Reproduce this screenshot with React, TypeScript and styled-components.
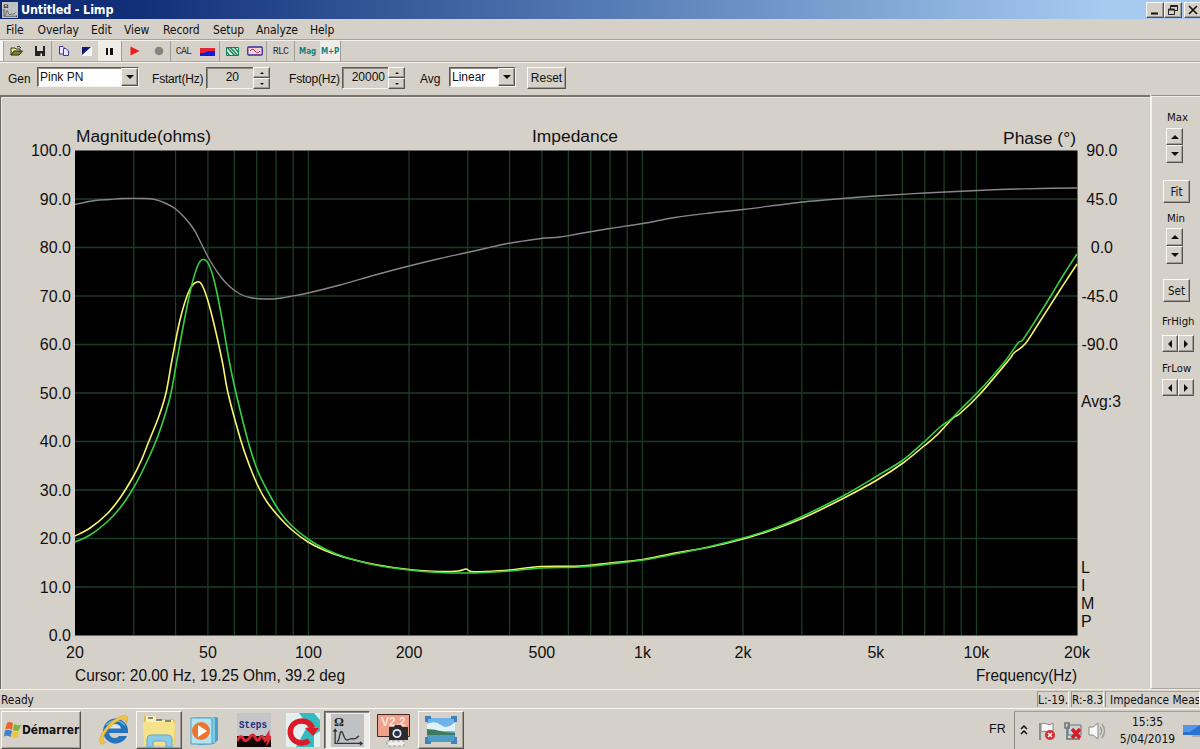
import React from "react";
import styled, { createGlobalStyle, css } from "styled-components";

const face = "#d5d0c8";
const ui = `"DejaVu Sans Condensed", "DejaVu Sans", sans-serif`;
const arial = `"Liberation Sans", Arial, sans-serif`;

const Global = createGlobalStyle`
  * { box-sizing: border-box; }
  html, body { margin: 0; padding: 0; }
  body { background: ${face}; color: #111; overflow: hidden; }
  svg { display: block; flex: none; }
`;

const raised = css`
  border: 1px solid;
  border-color: #fbfaf6 #55534f #55534f #fbfaf6;
  box-shadow: inset -1px -1px 0 #a09c95;
`;
const sunken = css`
  border: 1px solid;
  border-color: #5d5b57 #f6f4ef #f6f4ef #5d5b57;
  box-shadow: inset 1px 1px 0 #8d8a84;
`;

const Window = styled.div`
  width: 1200px;
  height: 749px;
  display: flex;
  flex-direction: column;
  overflow: hidden;
  background: ${face};
  font-family: ${ui};
`;

const TitleBar = styled.header`
  height: 19px;
  flex: none;
  display: flex;
  align-items: center;
  padding-left: 2px;
  background: linear-gradient(90deg, #0d2a72 0%, #12307a 12%, #5a80b8 53%, #a6caf0 92%);
`;
const Title = styled.h1`
  margin: 0 auto 0 3px;
  font-size: 12.5px;
  line-height: 17px;
  font-weight: bold;
  color: #fff;
  letter-spacing: -0.15px;
`;
const WinButton = styled.button<{ $gap?: number }>`
  ${raised}
  width: 18px;
  height: 16px;
  flex: none;
  padding: 0;
  margin-left: ${(p) => p.$gap ?? 0}px;
  background: ${face};
  display: flex;
  align-items: center;
  justify-content: center;
`;
const WinButtons = styled.div`
  display: flex;
  width: 54px;
  overflow: hidden;
`;

const MenuBar = styled.nav`
  height: 21px;
  flex: none;
  display: flex;
  border-bottom: 1px solid #a5a29b;
  padding-left: 6px;
  font-size: 12px;
  line-height: 22px;
`;
const MenuItem = styled.span<{ $w: number }>`
  width: ${(p) => p.$w}px;
  white-space: nowrap;
  letter-spacing: -0.1px;
`;

const ToolBar = styled.div`
  height: 22px;
  flex: none;
  display: flex;
  align-items: stretch;
  border-top: 1px solid #f4f1eb;
  border-bottom: 1px solid #aaa6a0;
`;
const Grip = styled.i`
  width: 4px;
  background: #f7f5f1;
  border-right: 1px solid #a5a29b;
`;
const Tool = styled.div<{ $w: number; $on?: boolean; $sep?: boolean }>`
  width: ${(p) => p.$w}px;
  flex: none;
  display: flex;
  align-items: center;
  justify-content: center;
  background: ${(p) => (p.$on ? "#eeece7" : "transparent")};
  border-right: ${(p) => (p.$sep ? "1px solid #a19d96" : "0")};
`;
const ToolText = styled.span<{ $teal?: boolean }>`
  font-family: ${(p) => (p.$teal ? ui : `"Liberation Mono", monospace`)};
  font-size: ${(p) => (p.$teal ? 8 : 10)}px;
  font-weight: ${(p) => (p.$teal ? "bold" : "normal")};
  letter-spacing: ${(p) => (p.$teal ? -0.1 : -0.8)}px;
  color: ${(p) => (p.$teal ? "#178080" : "#333")};
`;

const Controls = styled.div`
  height: 33px;
  flex: none;
  display: flex;
  align-items: flex-start;
  border-top: 1px solid #f4f1eb;
  padding: 4px 0 0 8px;
  font-family: ${arial};
  font-size: 12px;
`;
const Label = styled.span<{ $w: number; $tight?: boolean }>`
  width: ${(p) => p.$w}px;
  flex: none;
  white-space: nowrap;
  padding-top: 5px;
  line-height: 14px;
  letter-spacing: ${(p) => (p.$tight ? -0.2 : 0)}px;
`;
const Select = styled.div<{ $w: number; $gap: number }>`
  ${sunken}
  width: ${(p) => p.$w}px;
  height: 20px;
  margin-right: ${(p) => p.$gap}px;
  flex: none;
  display: flex;
  justify-content: space-between;
  background: #fff;
  line-height: 18px;
  padding-left: 2px;
`;
const Arrow = styled.span`
  ${raised}
  width: 17px;
  display: flex;
  align-items: center;
  justify-content: center;
  background: ${face};
`;
const Field = styled.div<{ $w: number }>`
  ${sunken}
  border-right: 0;
  width: ${(p) => p.$w}px;
  height: 22px;
  flex: none;
  text-align: right;
  line-height: 19px;
  padding-right: ${(p) => (p.$w > 46 ? 0 : 3)}px;
`;
const NumText = styled.span<{ $r: number }>`
  padding-right: ${(p) => p.$r}px;
`;
const Spin = styled.div<{ $gap: number }>`
  width: 17px;
  height: 22px;
  flex: none;
  margin-right: ${(p) => p.$gap}px;
  display: flex;
  flex-direction: column;
`;
const Square = styled.button<{ $w: number; $h: number }>`
  ${raised}
  width: ${(p) => p.$w}px;
  height: ${(p) => p.$h}px;
  flex: none;
  padding: 0;
  display: flex;
  align-items: center;
  justify-content: center;
  background: ${face};
`;
const PushButton = styled.button<{ $w: number; $h: number; $tahoma?: boolean }>`
  ${raised}
  width: ${(p) => p.$w}px;
  height: ${(p) => p.$h}px;
  padding: 0;
  background: ${face};
  color: #111;
  font-family: ${(p) => (p.$tahoma ? ui : arial)};
  font-size: ${(p) => (p.$tahoma ? 11.5 : 12)}px;
`;

const Body = styled.main`
  height: 594px;
  flex: none;
  display: flex;
`;
const Plot = styled.section`
  width: 1150px;
  border-top: 2px solid #77746e;
  border-left: 1px solid #6c6a66;
  box-shadow: inset 1px 1px 0 #e9e6e0;
`;
const Side = styled.aside`
  width: 50px;
  border-left: 2px solid #f4f2ed;
  border-top: 1px solid #94918a;
  border-bottom: 1px solid #aaa69f;
  box-shadow: inset 0 1px 0 #f0ede7;
  display: flex;
  flex-direction: column;
  font-size: 11.3px;
  overflow: hidden;
`;
const SideLabel = styled.span<{ $top: number; $left: number }>`
  margin: ${(p) => p.$top}px 0 0 ${(p) => p.$left}px;
  line-height: 14px;
  white-space: nowrap;
`;
const SideGroup = styled.div<{ $top: number; $left: number; $row?: boolean }>`
  margin: ${(p) => p.$top}px 0 0 ${(p) => p.$left}px;
  display: flex;
  flex-direction: ${(p) => (p.$row ? "row" : "column")};
`;

const Status = styled.footer`
  height: 19px;
  flex: none;
  display: flex;
  align-items: center;
  border-top: 1px solid #f1eee8;
  padding-left: 1px;
  font-size: 11.8px;
`;
const Ready = styled.span`
  flex: 1;
  line-height: 18px;
  padding-top: 1px;
`;
const Pane = styled.span<{ $w: number; $gap: number; $pad: number }>`
  width: ${(p) => p.$w}px;
  margin-right: ${(p) => p.$gap}px;
  padding-left: ${(p) => p.$pad}px;
  height: 16px;
  line-height: 16px;
  flex: none;
  white-space: nowrap;
  overflow: hidden;
  border-left: 1px solid #96928b;
  border-top: 1px solid #aaa69f;
  border-right: 1px solid #f6f4ef;
`;

const TaskBar = styled.div`
  height: 41px;
  flex: none;
  display: flex;
  border-top: 1px solid #fbf9f5;
  padding-top: 2px;
`;
const Start = styled.button`
  ${raised}
  margin: 0 9px 0 1px;
  width: 80px;
  height: 38px;
  padding: 0 0 0 2px;
  flex: none;
  background: ${face};
  display: flex;
  align-items: center;
  gap: 1px;
  color: #111;
  font: bold 11.8px ${ui};
`;
const Task = styled.div<{ $w: number; $mode?: "up" | "down" }>`
  width: ${(p) => p.$w}px;
  height: 38px;
  flex: none;
  display: flex;
  align-items: center;
  justify-content: center;
  border: 1px solid transparent;
  ${(p) => p.$mode === "up" && raised}
  ${(p) => p.$mode === "down" && sunken}
  background: ${(p) => (p.$mode === "down" ? "#eeece8" : "transparent")};
`;
const Lang = styled.span`
  margin-left: auto;
  width: 25px;
  font-family: ${arial};
  font-size: 12.5px;
  line-height: 37px;
`;
const Tray = styled.div`
  width: 186px;
  height: 38px;
  border-left: 1px solid #8b8882;
  border-top: 1px solid #a19d96;
  display: flex;
  align-items: center;
  padding-left: 4px;
`;
const Clock = styled.div`
  width: 68px;
  text-align: center;
  font-size: 12px;
  line-height: 17px;
  margin: 0 2px 0 5px;
  white-space: nowrap;
`;

const Tri = ({ d, s = 4 }: { d: "up" | "down" | "left" | "right"; s?: number }) => {
  const rot = { up: 0, right: 90, down: 180, left: 270 }[d];
  return (
    <svg width="10" height="10" viewBox="-5 -5 10 10">
      <path d={`M${-s} ${s / 2}L0 ${-s / 2}L${s} ${s / 2}Z`} transform={`rotate(${rot})`} fill="#111" />
    </svg>
  );
};

type Pt = [number, number];
const smooth = (p: Pt[]) => {
  let d = `M${p[0][0]} ${p[0][1]}`;
  for (let i = 0; i < p.length - 1; i++) {
    const a = p[i - 1] ?? p[i], b = p[i], c = p[i + 1], e = p[i + 2] ?? c;
    d += `C${b[0] + (c[0] - a[0]) / 6} ${b[1] + (c[1] - a[1]) / 6} ${c[0] - (e[0] - b[0]) / 6} ${c[1] - (e[1] - b[1]) / 6} ${c[0]} ${c[1]}`;
  }
  return d;
};

const phase: Pt[] = [[75,204.5],[95,200.5],[110,199.5],[122,198.5],[145,198.5],[155,199.5],[165,203],[175,208.5],[185,218],[194,229.5],[201,243],[208,257],[218,273],[228,285],[240,294],[252,298],[265,299],[278,298.5],[290,296.5],[308,293],[340,285],[375,275],[409,266],[440,258.5],[465,253],[485,248.5],[505,244],[520,241.5],[541,238.5],[560,237],[580,233.5],[610,228.5],[643,223.5],[675,217.5],[710,213],[743,209.5],[803,202],[843,198.5],[876,196],[925,193],[978,190.5],[1000,189.5],[1040,188.5],[1077,188]];
const green: Pt[] = [[75,542],[90,535],[107,522],[120,508],[131,492],[142,472],[156,441],[165,415],[171,393],[177,360],[184,322],[191,288],[198,265],[203.5,259.5],[209,265],[215,284],[222,319],[229,360],[236,393],[248,441],[257,469],[267,490],[280,512],[292,526],[308,539],[325,549],[345,557],[375,565],[409,570],[440,572.5],[465,573],[485,572.5],[510,571],[541,568],[580,567],[610,564],[643,560],[675,554],[710,546.5],[743,538],[775,528],[803,516],[843,496],[877,476],[903,460],[924,442],[940,427],[950,420],[960,410],[978,392],[990,379],[1006,360],[1018,343],[1023,339.5],[1037,318],[1052,294],[1064,274],[1077,254]];
const yellow: Pt[] = [[75,536],[90,528],[107,514],[120,498],[133,477],[141,461],[149,441],[159,416],[166,393],[172,360],[180,320],[189,291],[197,282],[203,287],[211,312],[222,360],[228,393],[241,441],[250,467],[259,488],[267,502],[280,518],[292,530],[308,542],[325,550.5],[345,557.5],[375,564.5],[409,569.5],[440,571.5],[458,571],[466,569],[471,571.5],[485,571.5],[510,570],[541,566.5],[580,566],[610,563],[643,559.5],[675,553],[710,547],[743,539],[775,529],[803,518],[843,498.5],[877,480],[903,463],[924,446],[937,435],[953,418],[960,413.5],[980,394],[1008,361],[1014,353],[1025,344],[1037,326],[1060,290],[1077,264]];
const freqs = [30, 40, 50, 60, 70, 80, 90, 100, 200, 300, 400, 500, 600, 700, 800, 900, 1000, 2000, 3000, 4000, 5000, 6000, 7000, 8000, 9000, 10000];
const fx = (f: number) => 75 + 334 * Math.log10(f / 20);
const vy = (v: number) => 635.5 - v * 4.85;
const xTicks: [number, string][] = [[20, "20"], [50, "50"], [100, "100"], [200, "200"], [500, "500"], [1000, "1k"], [2000, "2k"], [5000, "5k"], [10000, "10k"], [20000, "20k"]];

const Chart = () => (
  <svg width="1148" height="591" viewBox="1 97 1148 591" fontFamily={arial} fontSize="16" fill="#111">
    <rect x="75" y="150.5" width="1002.5" height="485" fill="#000" />
    <g stroke="#1d3c26" strokeWidth="1.3">
      {freqs.map((f) => <line key={f} x1={fx(f)} x2={fx(f)} y1="151" y2="635" />)}
      {[10, 20, 30, 40, 50, 60, 70, 80, 90].map((v) => <line key={v} x1="75" x2="1077" y1={vy(v)} y2={vy(v)} />)}
    </g>
    <g fill="none" strokeLinejoin="round">
      <path d={smooth(phase)} stroke="#8b848b" strokeWidth="1.4" />
      <path d={smooth(yellow)} stroke="#f8f66c" strokeWidth="1.6" />
      <path d={smooth(green)} stroke="#35d043" strokeWidth="1.6" />
    </g>
    <text x="76" y="142" textLength="135" lengthAdjust="spacingAndGlyphs">Magnitude(ohms)</text>
    <text x="532" y="142" textLength="86" lengthAdjust="spacingAndGlyphs">Impedance</text>
    <text x="1003" y="143.5" textLength="73" lengthAdjust="spacingAndGlyphs">Phase (°)</text>
    {[0, 10, 20, 30, 40, 50, 60, 70, 80, 90, 100].map((v) => (
      <text key={v} x="71" y={vy(v) + 5.5} textAnchor="end">{v.toFixed(1)}</text>
    ))}
    {[90, 45, 0, -45, -90].map((v, i) => (
      <text key={v} x={v < 0 ? 1118 : i === 2 ? 1113 : 1117.5} y={156 + i * 48.5} textAnchor="end">{v.toFixed(1)}</text>
    ))}
    {xTicks.map(([f, t]) => <text key={t} x={fx(f)} y="658" textAnchor="middle">{t}</text>)}
    <text x="75" y="681" textLength="270" lengthAdjust="spacingAndGlyphs">Cursor: 20.00 Hz, 19.25 Ohm, 39.2 deg</text>
    <text x="976" y="681" textLength="101" lengthAdjust="spacingAndGlyphs">Frequency(Hz)</text>
    <text x="1081" y="407" textLength="40" lengthAdjust="spacingAndGlyphs">Avg:3</text>
    {["L", "I", "M", "P"].map((c, i) => <text key={c} x="1081" y={572.5 + i * 18}>{c}</text>)}
  </svg>
);

const CurveIcon = ({ s }: { s: number }) => (
  <svg width={s} height={s} viewBox="0 0 32 32">
    <rect width="32" height="32" fill="#bfc1c2" />
    <path d="M4 29V15m-1.500 2L4 15l1.500 2M4 28.500h26m-2-1.500 2 1.500-2 1.500M6 27c3-2 2-10 4-10s2 7 5 8 3-2 6-1 4-1 6-3" fill="none" stroke="#333" strokeWidth="1.3" />
    <text x="3" y="12" fontSize="12" fontWeight="bold" fontFamily="Liberation Serif, serif" fill="#222">Ω</text>
  </svg>
);

const menus: [string, number][] = [["File", 31.5], ["Overlay", 53.5], ["Edit", 33], ["View", 39], ["Record", 50], ["Setup", 43], ["Analyze", 54], ["Help", 30]];

export default function App() {
  return (
    <Window>
      <Global />
      <TitleBar>
        <CurveIcon s={16} />
        <Title>Untitled - Limp</Title>
        <WinButtons>
          <WinButton><svg width="12" height="12"><path d="M2 9.5h7" stroke="#111" strokeWidth="2" /></svg></WinButton>
          <WinButton>
            <svg width="12" height="12" fill="none" stroke="#222"><path d="M3.5 5V1.5h7v5H8" /><path d="M3.5 2h7M1.5 5.5h6" strokeWidth="2" /><path d="M1.5 5.5h6v5h-6z" /></svg>
          </WinButton>
          <WinButton $gap={2}><svg width="12" height="12"><path d="m2 2 8 8m0-8-8 8" stroke="#111" strokeWidth="1.7" /></svg></WinButton>
        </WinButtons>
      </TitleBar>
      <MenuBar>
        {menus.map(([t, w]) => <MenuItem key={t} $w={w}>{t}</MenuItem>)}
      </MenuBar>
      <ToolBar>
        <Grip />
        <Tool $w={24}>
          <svg width="13" height="12"><path d="M1 10V3h4l1 1h4v2" fill="#f4ef7c" stroke="#333" /><path d="M1 10 4 6h8.5L9 10Z" fill="#87852a" stroke="#222" /><path d="M7 2q2-2 4 1" fill="none" stroke="#333" /></svg>
        </Tool>
        <Tool $w={24} $sep>
          <svg width="12" height="12"><path d="M1 1h10v10H1z" fill="#222" /><path d="M3 1h6v5H3z" fill="#d8d5ce" /><path d="M6.5 8.5H8V11H6.5z" fill="#fff" /></svg>
        </Tool>
        <Tool $w={24}>
          <svg width="12" height="12" fill="#e7e5ff" stroke="#39399b"><path d="M1.5 1.5H5L6.5 3v6h-5z" /><path d="M5.5 3.5H8L10.5 6v4.5h-5z" /></svg>
        </Tool>
        <Tool $w={22}><svg width="10" height="9"><path d="M0 0h10v9H0z" fill="#f5f4ff" /><path d="M0 0h9L0 8z" fill="#111a70" /></svg></Tool>
        <Tool $w={24} $on $sep><svg width="9" height="9"><path d="M1 1h2v7H1zM5 1h3v7H5z" fill="#111" /></svg></Tool>
        <Tool $w={26}><svg width="10" height="10"><path d="m.5.5 9 4.5-9 4.5Z" fill="#ec1c1c" /></svg></Tool>
        <Tool $w={23} $sep><svg width="10" height="10"><circle cx="5" cy="5" r="4.3" fill="#858580" /></svg></Tool>
        <Tool $w={25}><ToolText>CAL</ToolText></Tool>
        <Tool $w={24} $sep><svg width="15" height="9"><path d="M0 1h15v8H0z" fill="#1919d6" /><path d="M0 1h15v3L8 4l-4 2H0z" fill="#e42536" /></svg></Tool>
        <Tool $w={24}><svg width="13" height="9"><path d="M.5.5h12v8H.5z" fill="#dff1e4" stroke="#157f57" /><path d="m1 0 8 9M4 0l8 9M8 0l5 6M0 4l4 5" stroke="#157f57" strokeWidth="1.4" /></svg></Tool>
        <Tool $w={23} $sep><svg width="16" height="10"><rect x=".75" y="1" width="14.5" height="8" rx="1" fill="#f5d2dc" stroke="#30309a" strokeWidth="1.3" /><path d="M3 5q2.5-3.500 5 0t5 0" fill="none" stroke="#c22b3d" /></svg></Tool>
        <Tool $w={28} $sep><ToolText>RLC</ToolText></Tool>
        <Tool $w={25}><ToolText $teal>Mag</ToolText></Tool>
        <Tool $w={21} $on $sep><ToolText $teal>M+P</ToolText></Tool>
      </ToolBar>
      <Controls>
        <Label $w={29}>Gen</Label>
        <Select $w={102} $gap={13}>Pink PN<Arrow><Tri d="down" /></Arrow></Select>
        <Label $w={54} $tight>Fstart(Hz)</Label>
        <Field $w={47}><NumText $r={14}>20</NumText></Field>
        <Spin $gap={19}><Square $w={17} $h={11}><Tri d="up" s={2} /></Square><Square $w={17} $h={11}><Tri d="down" s={2} /></Square></Spin>
        <Label $w={53} $tight>Fstop(Hz)</Label>
        <Field $w={46}>20000</Field>
        <Spin $gap={15}><Square $w={17} $h={11}><Tri d="up" s={2} /></Square><Square $w={17} $h={11}><Tri d="down" s={2} /></Square></Spin>
        <Label $w={29}>Avg</Label>
        <Select $w={67} $gap={11}>Linear<Arrow><Tri d="down" /></Arrow></Select>
        <PushButton $w={39} $h={22}>Reset</PushButton>
      </Controls>
      <Body>
        <Plot><Chart /></Plot>
        <Side>
          <SideLabel $top={15} $left={15}>Max</SideLabel>
          <SideGroup $top={3} $left={14}><Square $w={17} $h={17}><Tri d="up" /></Square><Square $w={17} $h={18}><Tri d="down" /></Square></SideGroup>
          <SideGroup $top={17} $left={11}><PushButton $w={27} $h={23} $tahoma>Fit</PushButton></SideGroup>
          <SideLabel $top={9} $left={15}>Min</SideLabel>
          <SideGroup $top={2} $left={14}><Square $w={17} $h={18}><Tri d="up" /></Square><Square $w={17} $h={18}><Tri d="down" /></Square></SideGroup>
          <SideGroup $top={15} $left={11}><PushButton $w={27} $h={23} $tahoma>Set</PushButton></SideGroup>
          <SideLabel $top={13} $left={10}>FrHigh</SideLabel>
          <SideGroup $top={6} $left={10} $row><Square $w={16} $h={17}><Tri d="left" /></Square><Square $w={16} $h={17}><Tri d="right" /></Square></SideGroup>
          <SideLabel $top={10} $left={10}>FrLow</SideLabel>
          <SideGroup $top={3} $left={10} $row><Square $w={16} $h={17}><Tri d="left" /></Square><Square $w={16} $h={17}><Tri d="right" /></Square></SideGroup>
        </Side>
      </Body>
      <Status>
        <Ready>Ready</Ready>
        <Pane $w={32} $gap={2} $pad={0}>L:-19.</Pane>
        <Pane $w={33} $gap={1} $pad={0}>R:-8.3</Pane>
        <Pane $w={95} $gap={0} $pad={4}>Impedance Meas</Pane>
      </Status>
      <TaskBar>
        <Start>
          <svg width="17" height="16" viewBox="0 0 17 16"><path d="M3 1q3-2 6 .5L8 8q-3-2-7-.5Z" fill="#e8652c" /><path d="M10 2q3 2 7 .5l-2 6q-3 1-6-.5Z" fill="#7db53c" /><path d="M1 8.5q3-1.500 7 .5l-1.500 6q-3-2-6.500-.5Z" fill="#3c82cf" /><path d="M9 9q3 1.500 6 .5l-1.500 6q-3 1-6-.5Z" fill="#f2c230" /></svg>
          Démarrer
        </Start>
        <Task $w={46}>
          <svg width="34" height="34" viewBox="0 0 34 34">
            <path d="M31 23a12.500 12.500 0 1 1 1-6v3H13q1 5 6 5 3 0 4-2Z" fill="#2473bd" />
            <path d="M13 15.500h12q-1-4.500-6-4.500t-6 4.500Z" fill="#dfe6ea" />
            <path d="M10 12q9-9 19 0" fill="none" stroke="#62b8ea" strokeWidth="1.5" />
            <path d="M7 31C-2 32 9 8 26 3c6-2 7 2 4 8 0-5-2-6-6-4C11 13 2 30 10 29Z" fill="#f2c641" stroke="#b98a18" strokeWidth=".4" />
          </svg>
        </Task>
        <Task $w={46} $mode="up">
          <svg width="36" height="34" viewBox="0 0 36 34"><path d="M3 3h11l3 3h15q2 0 2 2v22q0 2-2 2H4q-1 0-1-2z" fill="#e3bf58" /><path d="M5 3h9l3 4h15v6H5z" fill="#f9efbd" /><path d="M7 5h5M15 7h6M24 8h6" stroke="#5b6a58" strokeWidth="1.7" /><path d="M2 9h31l1 2-1 21H3z" fill="#f6e28a" /><path d="M6 34v-8q0-4 4-4h16q5 0 5 4v8h-6v-4q0-2-2-2h-9q-2 0-2 2v4z" fill="#8ccbe8" stroke="#5ba9cf" /></svg>
        </Task>
        <Task $w={44}>
          <svg width="30" height="32" viewBox="0 0 30 32"><path d="M9 3h18q2 0 2 2v21l-4 4-16 1z" fill="#489fc7" /><path d="M6 3h18q2 0 2 2v24H6z" fill="#80cae4" /><path d="M2 4h19q2 0 2 2v24H2z" fill="#b4e3f2" stroke="#4ba3c6" /><circle cx="12" cy="17" r="9" fill="#ef742d" /><path d="m9 11 9 6-9 6Z" fill="#fff" /></svg>
        </Task>
        <Task $w={56}>
          <svg width="34" height="34" viewBox="0 0 34 34"><path d="M0 0h34v34H0z" fill="#c3c5c8" /><path d="M0 23h34v11H0z" fill="#140406" /><path d="M0 28q4-8 7-1 3 2 6-3t6 2q2 3 4-1t5 2l3-5v6l3-5" fill="none" stroke="#dc2a32" strokeWidth="3" /><text x="2" y="15" fontFamily="Liberation Mono, monospace" fontSize="11" fontWeight="bold" fill="#252c7a" textLength="28" lengthAdjust="spacingAndGlyphs">Steps</text></svg>
        </Task>
        <Task $w={42}>
          <svg width="34" height="34" viewBox="0 0 34 34"><path d="M0 0h34v34H0z" fill="#35bac1" /><path d="M0 0h13l9 12-12 22H0z" fill="#e2f1ef" /><path d="M28 34V22l6-4v16zM28 0h6v7z" fill="#e2f1ef" /><path d="M23 27.500A11.500 11 0 1 1 26.500 15" fill="none" stroke="#dc1b28" strokeWidth="5.500" /><path d="M19 15h14l-6 8Z" fill="#dc1b28" /></svg>
        </Task>
        <Task $w={46} $mode="down"><CurveIcon s={33} /></Task>
        <Task $w={48}>
          <svg width="34" height="34" viewBox="0 0 34 34"><path d="M.5 1.5h32v22H.5z" fill="#efa18d" stroke="#432622" /><text x="4" y="13" fontFamily={arial} fontSize="12" fontWeight="bold" fill="#fbe4d8">V2.2</text><path d="M10 28h17v5H10z" fill="#eee" stroke="#999" strokeDasharray="3 2" /><path d="M12 14h5l1-2h6l1 2h6v13H12z" fill="#292b31" /><circle cx="20" cy="20.5" r="4.5" fill="#e5e9ed" /><circle cx="20" cy="20.5" r="2.8" fill="#25344c" /></svg>
        </Task>
        <Task $w={46} $mode="up">
          <svg width="34" height="30" viewBox="0 0 34 30"><path d="M3 3h28v24H3z" fill="#6db4ea" /><path d="M3 9q8-4 14 1t14-3v9H3z" fill="#e1f3f8" /><path d="M3 14q8 0 17 3l11 1v3H3z" fill="#3c7b5e" /><path d="M3 20h28v7H3z" fill="#4f9cc4" /><path d="M2.500 7V2.500H7M27 2.500h4.500V7M31.500 22v5.500H27M7 27.500H2.500V22" fill="none" stroke="#3f83bd" strokeWidth="3" /></svg>
        </Task>
        <Lang>FR</Lang>
        <Tray>
          <svg width="10" height="14" fill="none" stroke="#111" strokeWidth="1.5"><path d="m2 5 3-3 3 3M2 10l3-3 3 3" /></svg>
          <svg width="80" height="22" viewBox="0 0 80 22">
            <path d="M11 20V3" stroke="#777" strokeWidth="1.5" /><path d="M12 4q3-2 6 0t6-1v9q-3 2-6 0t-6 0z" fill="#f7f7f7" stroke="#888" /><circle cx="21" cy="15" r="5" fill="#d22d35" /><path d="m19 13 4 4m0-4-4 4" stroke="#fff" strokeWidth="1.5" />
            <path d="M39 5h13v10H39z" fill="#cad3d7" stroke="#61757c" /><path d="M36 3h4v5h-4zM38 8v11h13" fill="none" stroke="#61757c" strokeWidth="1.5" /><path d="m43 9 8 9m0-9-8 9" stroke="#d71e28" strokeWidth="3.5" />
            <path d="M60 7h4l5-4v16l-5-4h-4z" fill="#f6f6f6" stroke="#898989" /><path d="M71 7q3 4 0 8M73 4q5 7 0 14" fill="none" stroke="#999" strokeWidth="1.3" />
          </svg>
          <Clock>15:35<br />5/04/2019</Clock>
          <svg width="17" height="15"><path d="M0 2h17v10H0z" fill="#2872d2" /><path d="M0 2h17L7 9H0z" fill="#5695e6" /><path d="M10 12h7v2H9z" fill="#aaa" /></svg>
        </Tray>
      </TaskBar>
    </Window>
  );
}
